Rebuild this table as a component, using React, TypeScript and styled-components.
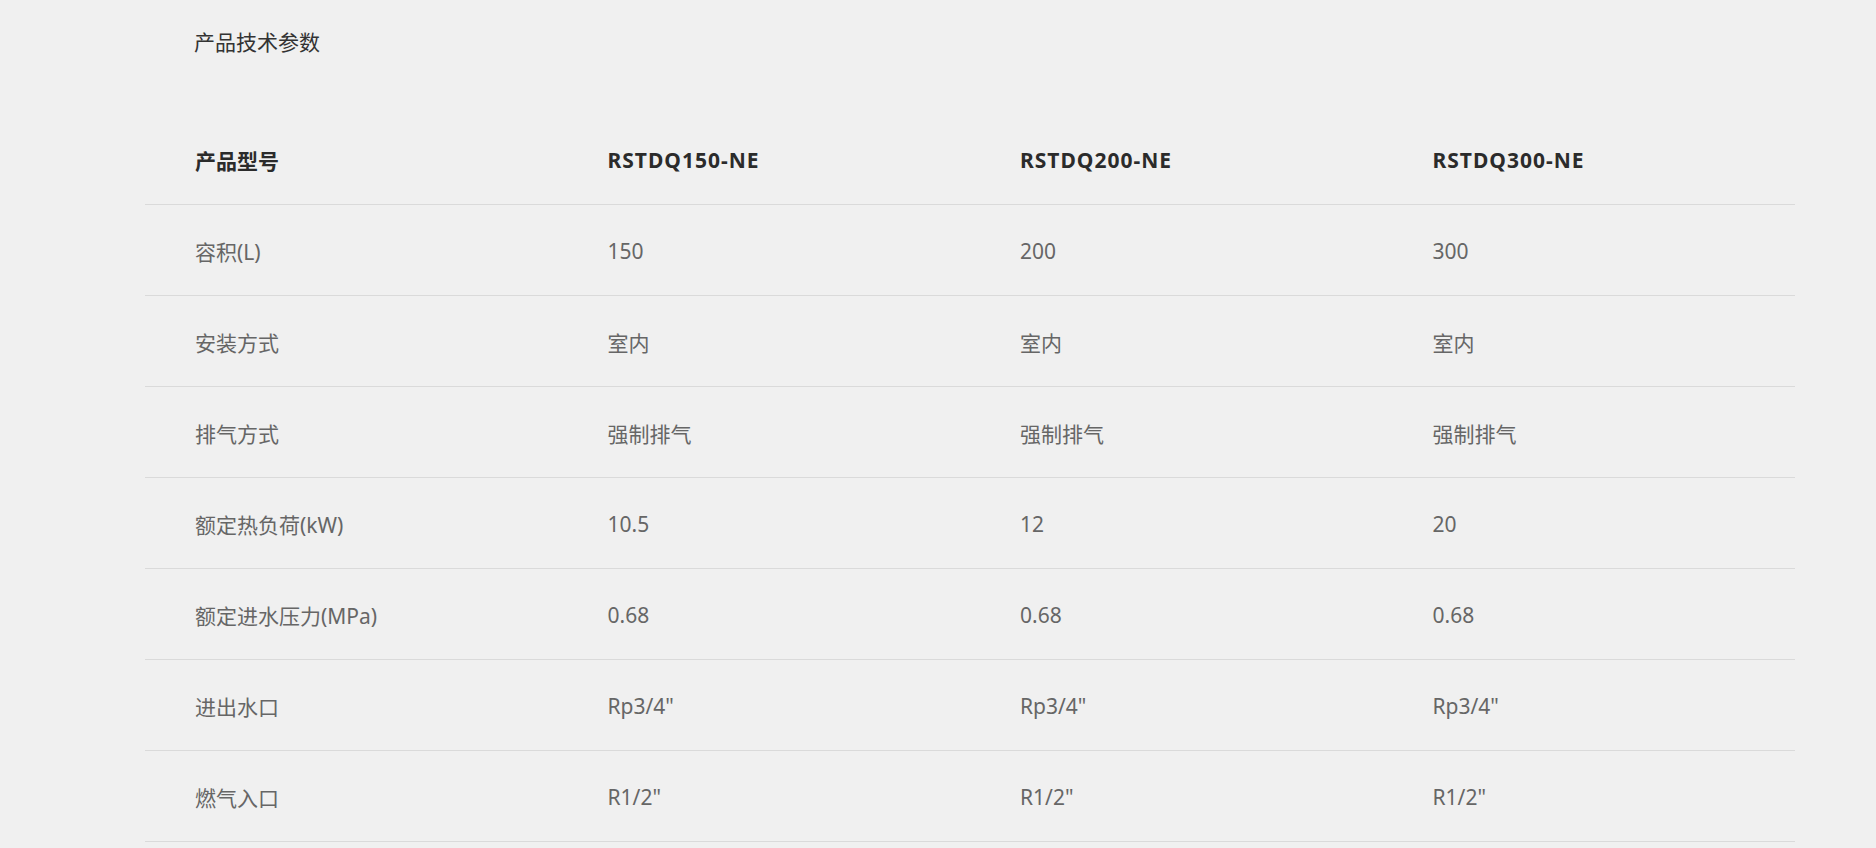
import React from "react";
import styled, { createGlobalStyle } from "styled-components";

const GlobalStyle = createGlobalStyle`
  body {
    margin: 0;
    background: #f0f0f0;
    font-family: "Noto Sans", "Noto Sans CJK SC", sans-serif;
  }
`;

const Page = styled.div`
  padding: 27px 0 0 145px;
`;

const Title = styled.h2`
  margin: 0 0 57px 49px;
  font-size: 21px;
  line-height: 30px;
  font-weight: 400;
  color: #333;
`;

const Table = styled.div`
  width: 1650px;
`;

const Row = styled.div`
  display: grid;
  grid-template-columns: repeat(4, 1fr);
  height: 90px;
  border-bottom: 1px solid #dadada;
`;

const Cell = styled.div<{ $head?: boolean; $latin?: boolean }>`
  display: flex;
  align-items: center;
  padding: 2px 0 0 50px;
  font-size: 21px;
  font-weight: ${(p) => (p.$head ? 700 : 400)};
  color: ${(p) => (p.$head ? "#2b2b2b" : "#666")};
  letter-spacing: ${(p) => (p.$head && p.$latin ? "1px" : "0")};
`;

const models = ["RSTDQ150-NE", "RSTDQ200-NE", "RSTDQ300-NE"];

const specs: [string, string[]][] = [
  ["容积(L)", ["150", "200", "300"]],
  ["安装方式", ["室内", "室内", "室内"]],
  ["排气方式", ["强制排气", "强制排气", "强制排气"]],
  ["额定热负荷(kW)", ["10.5", "12", "20"]],
  ["额定进水压力(MPa)", ["0.68", "0.68", "0.68"]],
  ["进出水口", ['Rp3/4"', 'Rp3/4"', 'Rp3/4"']],
  ["燃气入口", ['R1/2"', 'R1/2"', 'R1/2"']],
];

export default function App() {
  return (
    <>
      <GlobalStyle />
      <Page>
        <Title>产品技术参数</Title>
        <Table>
          <Row>
            <Cell $head>产品型号</Cell>
            {models.map((m) => (
              <Cell $head $latin key={m}>
                {m}
              </Cell>
            ))}
          </Row>
          {specs.map(([label, values]) => (
            <Row key={label}>
              <Cell>{label}</Cell>
              {values.map((v, i) => (
                <Cell key={i}>{v}</Cell>
              ))}
            </Row>
          ))}
        </Table>
      </Page>
    </>
  );
}
